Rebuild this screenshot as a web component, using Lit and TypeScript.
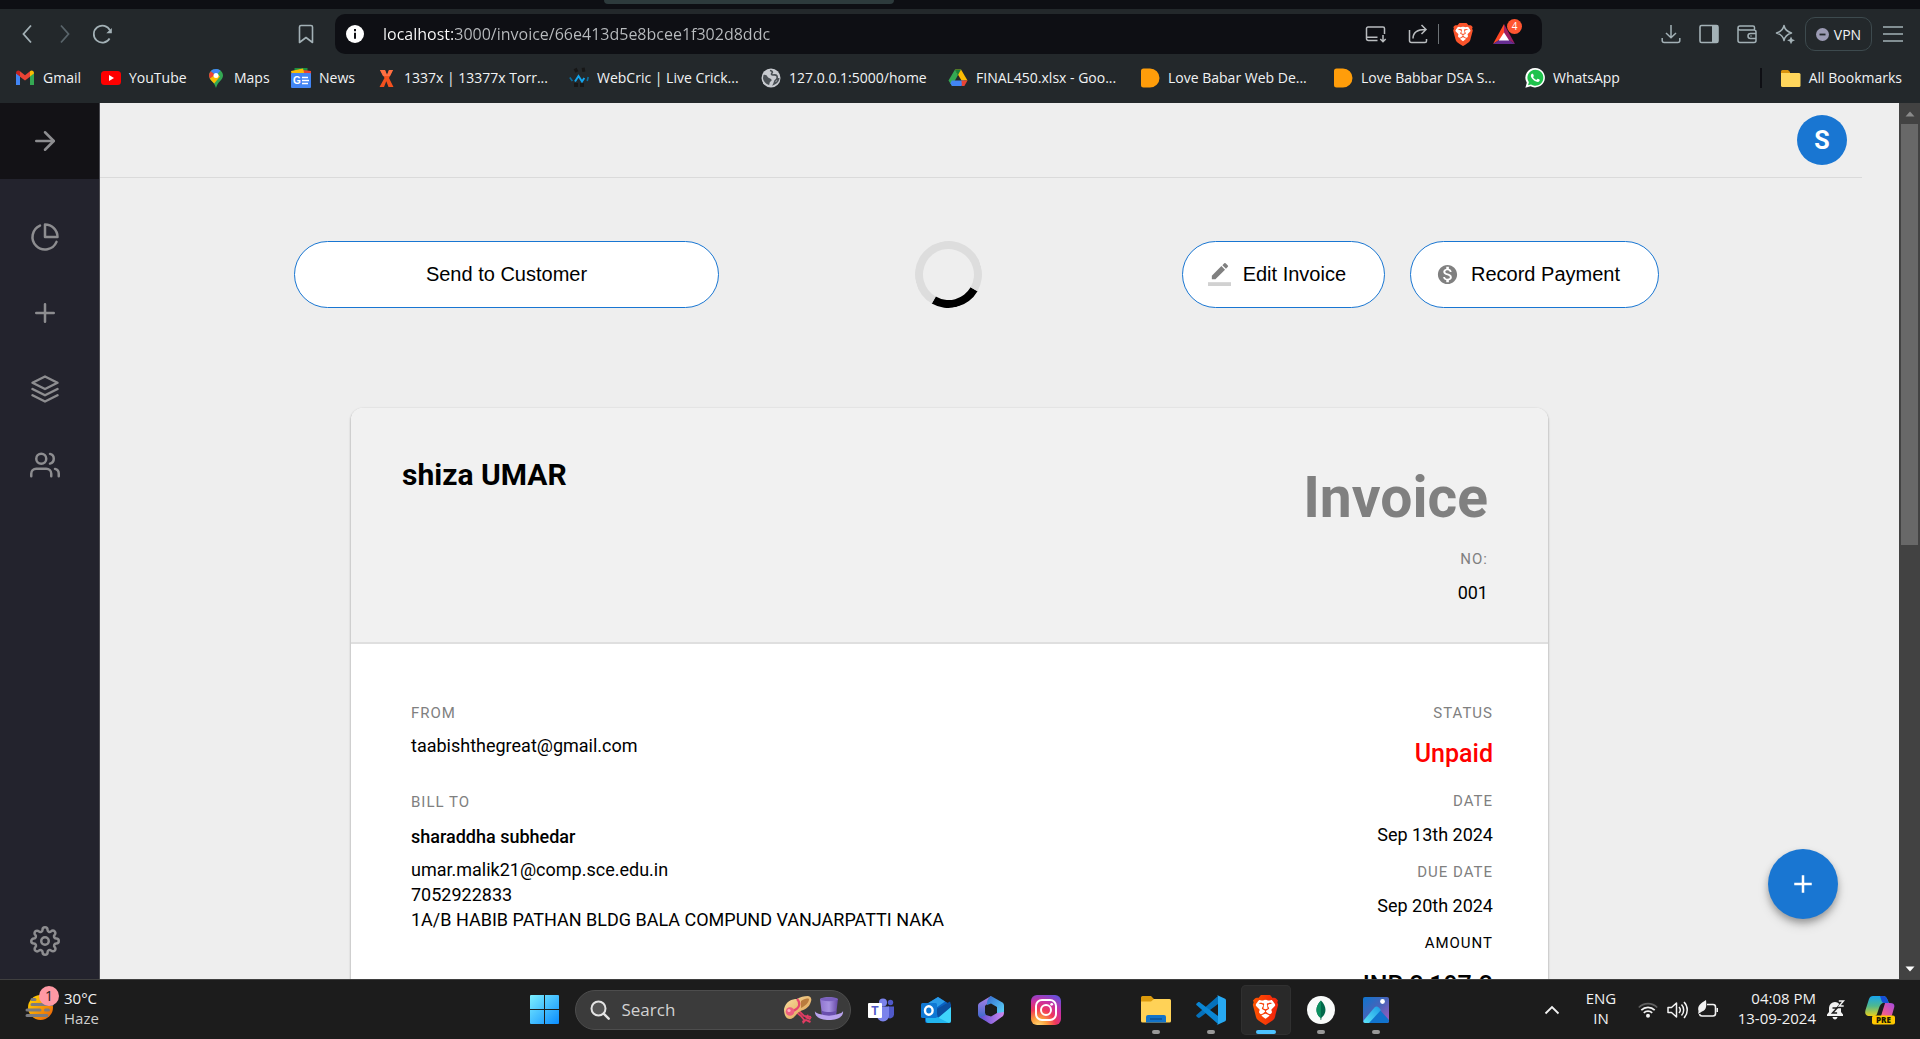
import { LitElement, html, css, svg, type TemplateResult } from "lit";
import { customElement } from "lit/decorators.js";

const BRAVE_PATH =
  "M15.68 0l2.096 2.38s1.84-.512 2.709.358c.868.87 1.584 1.638 1.584 1.638l-.562 1.381.715 2.047s-2.104 7.98-2.35 8.955c-.486 1.919-.818 2.66-2.198 3.633-1.38.972-3.884 2.66-4.293 2.916-.409.256-.92.692-1.38.692-.46 0-.97-.436-1.38-.692a185.796 185.796 0 01-4.293-2.916c-1.38-.973-1.712-1.714-2.197-3.633-.247-.975-2.351-8.955-2.351-8.955l.715-2.047-.562-1.381s.716-.768 1.585-1.638c.868-.87 2.708-.358 2.708-.358L8.321 0h7.36zm-3.679 14.936c-.14 0-1.038.317-1.758.69-.72.373-1.242.637-1.409.742-.167.104-.065.301.087.409.152.107 2.194 1.69 2.393 1.866.198.175.489.464.687.464.198 0 .49-.29.688-.464.198-.175 2.24-1.759 2.392-1.866.152-.108.254-.305.087-.41-.167-.104-.689-.368-1.41-.741-.72-.373-1.617-.69-1.757-.69zm0-11.278s-.409.001-1.022.206-1.278.46-1.584.46c-.307 0-2.581-.434-2.581-.434S4.119 7.152 4.119 7.849c0 .697.339.881.68 1.243l2.02 2.149c.192.203.59.511.356 1.066-.235.555-.58 1.26-.196 1.977.384.716 1.042 1.194 1.464 1.115.421-.08 1.412-.598 1.776-.834.364-.237 1.518-1.19 1.518-1.554 0-.365-1.193-1.02-1.413-1.168-.22-.15-1.226-.725-1.247-.95-.02-.227-.012-.293.284-.851.297-.559.831-1.304.742-1.8-.089-.495-.95-.753-1.565-.986-.615-.232-1.799-.671-1.947-.74-.148-.068-.11-.133.339-.175.448-.043 1.719-.212 2.292-.052.573.16 1.552.403 1.632.532.079.13.149.134.067.579-.081.445-.5 2.581-.541 2.96-.04.38-.12.63.288.724.409.094 1.097.256 1.333.256s.924-.162 1.333-.256c.408-.093.329-.344.288-.723-.04-.38-.46-2.516-.541-2.961-.082-.445-.012-.45.067-.579.08-.129 1.059-.372 1.632-.532.573-.16 1.845.009 2.292.052.449.042.487.107.339.175-.148.069-1.332.508-1.947.74-.615.233-1.476.49-1.565.986-.09.496.445 1.241.742 1.8.297.558.304.624.284.85-.02.226-1.026.802-1.247.95-.22.15-1.413.804-1.413 1.169 0 .364 1.154 1.317 1.518 1.554.364.236 1.355.755 1.776.834.422.079 1.08-.4 1.464-1.115.384-.716.039-1.422-.195-1.977-.235-.555.163-.863.355-1.066l2.02-2.149c.341-.362.68-.546.68-1.243 0-.697-2.695-3.96-2.695-3.96s-2.274.436-2.58.436c-.307 0-.972-.256-1.585-.461-.613-.205-1.022-.206-1.022-.206z";

const braveLion = (fill: string) => svg`
  <path d="M6 3.400h12l2.600 5-2.400 8L12 21l-6.200-4.600L3.400 8.400z" fill="#fff"/>
  <path d=${BRAVE_PATH} fill=${fill} fill-rule="evenodd"/>`;

/** Wraps drawing content in an inline, decorative svg of the given size. */
const icon = (w: number, h: number, box: string, body: unknown): TemplateResult =>
  html`<svg width=${w} height=${h} viewBox=${box} aria-hidden="true" fill="none">${body}</svg>`;

const base = css`
  * {
    box-sizing: border-box;
  }
  svg {
    display: block;
    flex: none;
    overflow: visible;
  }
  button {
    font: inherit;
    color: inherit;
    background: none;
    border: 0;
    padding: 0;
    margin: 0;
    display: flex;
    align-items: center;
    justify-content: center;
    cursor: pointer;
  }
  a {
    color: inherit;
    text-decoration: none;
  }
`;

/* ------------------------------------------------------------------ */
/* Browser toolbar and bookmarks                                       */
/* ------------------------------------------------------------------ */

const bookmarkIcons = {
  gmail: svg`
    <path d="M1 17V5l4 3v9z" fill="#4285f4"/>
    <path d="M15 17V8l4-3v12z" fill="#34a853"/>
    <path d="M1 5.500C1 2.500 3.500 2 5 3.200V8.500L1 5.500z" fill="#c5221f"/>
    <path d="M5 3.300l5 3.900 5-3.900v5.400l-5 3.900-5-3.900z" fill="#ea4335"/>
    <path d="M15 3.200c1.500-1.200 4-.7 4 2.300l-4 3z" fill="#fbbc04"/>`,
  youtube: svg`
    <rect x="0" y="3" width="20" height="14" rx="3.500" fill="#f00"/>
    <path d="M8 7v6l5-3z" fill="#fff"/>`,
  maps: svg`
    <path d="M10 1C6 1 3 4 3 7.400 3 12 8 13 10 20c1.800-7 7-8 7-12.600C17 4 14 1 10 1z" fill="#34a853"/>
    <path d="M3.800 10.500C5.600 13.500 7 14 8.200 15.600L14 8.500 10 5z" fill="#fbbc04"/>
    <path d="M10 1C7.800 1 5.900 1.900 4.700 3.300l5.300 4.500L14.500 2.600C13.300 1.600 11.700 1 10 1z" fill="#4285f4"/>
    <path d="M4.700 3.300C2.500 6 2.700 8.500 3.800 10.500L9 6.800z" fill="#ea4335"/>
    <circle cx="10" cy="7.400" r="2.500" fill="#fff"/>`,
  news: svg`
    <path d="M3.500 0h13v6h-13z" fill="#1e8e3e"/>
    <path d="M8 1.500L20 3v5H8z" fill="#ea4335"/>
    <path d="M0 3l12-2.500L14 8H1z" fill="#fbbc04"/>
    <rect x="0" y="5" width="20" height="15" rx="1" fill="#4285f4"/>
    <text x="2" y="16" font-family="Liberation Sans, sans-serif" font-weight="700" font-size="10" fill="#fff">G</text>
    <path d="M11 9.500h6M11 12.500h7M11 15.500h6" stroke="#fff" stroke-width="1.600"/>`,
  x: svg`
    <path d="M4 2h5l2 5 2-5h4l-4 8 4.500 9h-5L10.300 13.300 8 19H3.500L8.500 10z" fill="#f4511e"/>
    <path d="M4 2h5l2 5 2-5h4l-3 6H7z" fill="#ff7043"/>`,
  webcric: svg`
    <path d="M5.500 3l3-1.500M7 15v4M13 15v4M13 2l3-.5" stroke="#171717" stroke-width="4"/>
    <path d="M.8 9.500l2.600 3.500M19.200 9l-1 4" stroke="#0c6f9f" stroke-width="1.600"/>
    <path d="M6 13.500l3.500-5.500 3.500 5.500 2.300-3.500" stroke="#14a5ee" stroke-width="2"/>`,
  globe: svg`
    <circle cx="10" cy="10" r="9.500" fill="#c8cbd0"/>
    <path d="M2.500 7c2-.5 3.500.3 4 1.800S9 10 10 11s.8 2-.5 2.500-.6 2.600-1.500 3.600C5 16 2 13 2 10z" fill="#4a5055"/>
    <path d="M9 2.500c2 .5 3 1.500 2 2.500s-.5 2 1 2 3-.5 3.800.8.400 3.700-1 4.200-1 2.500-1.800 4c3-1.200 4.500-3.500 4.700-6" stroke="#4a5055" stroke-width="1.700"/>`,
  drive: svg`
    <path d="M7 1.500h6l6.500 11h-6z" fill="#fbbc04"/>
    <path d="M7 1.500l3 5.400L4 18 .5 12.500z" fill="#34a853"/>
    <path d="M3.600 12.500h12.800L13.600 18H6.800L4 18l-1.500-2.500z" fill="#4285f4"/>
    <path d="M13.500 12.500h6L16.400 18h-2.500z" fill="#ea4335"/>
    <path d="M7 1.500h6l-3 5.400z" fill="#188038"/>`,
  dee: svg`<path d="M1 3a2.500 2.500 0 0 1 2.500-2.500H10a9.500 9.500 0 0 1 0 19H3.500A2.500 2.500 0 0 1 1 17z" fill="#ff9d0a"/>`,
  whatsapp: svg`
    <path d="M10.300 0a9.700 9.700 0 1 1-4.800 18.200L.4 19.700l1.400-5A9.700 9.700 0 0 1 10.300 0z" fill="#fff"/>
    <path d="M10.300 1.700a8 8 0 1 1-4.300 14.700L3 17.300l.9-3A8 8 0 0 1 10.300 1.700z" fill="#1fc24c"/>
    <path transform="translate(1.400 .9) scale(.74)" fill="#fff" d="M17.472 14.382c-.297-.149-1.758-.867-2.030-.967-.273-.099-.471-.148-.67.15-.197.297-.767.966-.94 1.164-.173.199-.347.223-.644.075-.297-.15-1.255-.463-2.390-1.475-.883-.788-1.480-1.761-1.653-2.059-.173-.297-.018-.458.13-.606.134-.133.298-.347.446-.52.149-.174.198-.298.298-.497.099-.198.05-.371-.025-.52-.075-.149-.669-1.612-.916-2.207-.242-.579-.487-.5-.669-.51-.173-.008-.371-.01-.57-.01-.198 0-.52.074-.792.372-.272.297-1.040 1.016-1.040 2.479 0 1.462 1.065 2.875 1.213 3.074.149.198 2.096 3.200 5.077 4.487.709.306 1.262.489 1.694.625.712.227 1.360.195 1.871.118.571-.085 1.758-.719 2.006-1.413.248-.694.248-1.289.173-1.413-.074-.124-.272-.198-.57-.347"/>`,
};

const bookmarks: Array<[keyof typeof bookmarkIcons, string]> = [
  ["gmail", "Gmail"],
  ["youtube", "YouTube"],
  ["maps", "Maps"],
  ["news", "News"],
  ["x", "1337x | 13377x Torr..."],
  ["webcric", "WebCric | Live Crick..."],
  ["globe", "127.0.0.1:5000/home"],
  ["drive", "FINAL450.xlsx - Goo..."],
  ["dee", "Love Babar Web De..."],
  ["dee", "Love Babbar DSA S..."],
  ["whatsapp", "WhatsApp"],
];

@customElement("browser-bar")
class BrowserBar extends LitElement {
  static styles = [
    base,
    css`
      :host {
        display: block;
        flex: none;
        background: #23282b;
        color: #f1f3f4;
        font-family: "Open Sans", "Noto Sans", sans-serif;
        font-size: 14px;
      }
      .strip {
        height: 9px;
        background: #0e0f14;
        display: flex;
        padding-left: 604px;
      }
      .tab {
        width: 290px;
        height: 4px;
        background: #2d3a3c;
        border-radius: 0 0 8px 8px;
      }
      .toolbar {
        display: flex;
        align-items: center;
        padding: 5px 17px;
        height: 50px;
        color: #a3b1b6;
      }
      .nav {
        display: flex;
        align-items: center;
        gap: 18px;
        width: 299px;
        margin-right: 19px;
      }
      .nav .save {
        margin-left: auto;
      }
      .dim {
        color: #59646a;
      }
      .address {
        flex: 1;
        height: 40px;
        display: flex;
        align-items: center;
        background: #0e0f14;
        border-radius: 10px;
        padding: 0 20px 0 10px;
        color: #b9bcbf;
      }
      .url {
        flex: 1;
        min-width: 0;
        height: 30px;
        margin: 0 18px;
        padding: 0;
        border: 0;
        outline: 0;
        color: #c3c5c8;
        -webkit-text-fill-color: transparent;
        background: linear-gradient(to right, #fff 73px, #b9bcbf 73px);
        background-clip: text;
        -webkit-background-clip: text;
        font-family: inherit;
        font-size: 16px;
      }
      .tools {
        display: flex;
        align-items: center;
      }
      .share {
        margin-left: 22px;
      }
      .rule {
        width: 1px;
        height: 20px;
        background: #6d7276;
        margin: 0 14px 0 10px;
      }
      .ads {
        position: relative;
        margin-left: 20px;
        margin-right: 7px;
      }
      .badge {
        position: absolute;
        left: 14px;
        top: -5px;
        width: 15px;
        height: 15px;
        border-radius: 50%;
        background: #ff5530;
        color: #fff;
        font-size: 10px;
        line-height: 15px;
        text-align: center;
      }
      .right {
        display: flex;
        align-items: center;
        gap: 18px;
        width: 361px;
        justify-content: flex-end;
      }
      .end {
        display: flex;
        align-items: center;
        gap: 11px;
        margin-left: -8px;
      }
      .vpn {
        width: 67px;
        height: 34px;
        border: 1px solid #3d4a4e;
        border-radius: 10px;
        gap: 5px;
        color: #f1f3f4;
      }
      .marks {
        display: flex;
        align-items: center;
        justify-content: space-between;
        height: 44px;
        padding: 0 18px 6px 15px;
      }
      .list {
        display: grid;
        grid-template-columns: 86px 105px 85px 85px 193px 192px 187px 192px 193px 192px auto;
        margin: 0;
        padding: 0;
        list-style: none;
      }
      .mark {
        display: flex;
        align-items: center;
        gap: 8px;
        white-space: nowrap;
        line-height: 20px;
      }
      .all {
        border-left: 2px solid #0e0f14;
        padding-left: 19px;
      }
    `,
  ];

  render() {
    return html`
      <div class="strip"><div class="tab"></div></div>
      <div class="toolbar">
        <div class="nav">
          <button aria-label="Back">
            ${icon(20, 20, "0 0 20 20", svg`<path d="M14 1.500L6.500 10l7.500 8.500" stroke="currentColor" stroke-width="1.800"/>`)}
          </button>
          <button class="dim" aria-label="Forward">
            ${icon(20, 20, "0 0 20 20", svg`<path d="M6 1.500l7.500 8.500L6 18.500" stroke="currentColor" stroke-width="1.800"/>`)}
          </button>
          <button aria-label="Reload">
            ${icon(20, 20, "0 0 20 20", svg`<path d="M16.600 14.500A8.500 8.500 0 1 1 17 6.500" stroke="currentColor" stroke-width="1.700"/><path d="M18.800 4v5.200h-5.500z" fill="currentColor"/>`)}
          </button>
          <button class="save" aria-label="Bookmark this page">
            ${icon(20, 20, "0 0 20 20", svg`<path d="M3.500 3a1.500 1.500 0 0 1 1.500-1.500h10A1.500 1.500 0 0 1 16.500 3v15.500L10 13.500l-6.500 5z" stroke="currentColor" stroke-width="1.600" stroke-linejoin="round"/>`)}
          </button>
        </div>
        <div class="address">
          ${icon(20, 20, "0 0 20 20", svg`<circle cx="10" cy="10" r="9" fill="#fff"/><path d="M10 8.800v6M10 5v2.300" stroke="#0e0f14" stroke-width="2"/>`)}
          <input class="url" aria-label="Address" spellcheck="false" .value=${"localhost:3000/invoice/66e413d5e8bcee1f302d8ddc"} />
          <div class="tools">
            <button aria-label="Install page">
              ${icon(20, 20, "0 0 20 20", svg`<path d="M11.500 16.500H2.500a2 2 0 0 1-2-2V4.500a1.500 1.500 0 0 1 1.500-1.500h15a1.500 1.500 0 0 1 1.500 1.500v5.500M1 13.300h10.500M17 11v6.500M14.300 15l2.700 2.700 2.700-2.700" stroke="currentColor" stroke-width="1.500"/>`)}
            </button>
            <button class="share" aria-label="Share">
              ${icon(20, 20, "0 0 20 20", svg`<path d="M1.500 6v10.500a2 2 0 0 0 2 2h13.500a1.500 1.500 0 0 0 1.500-1.500v-2M5 14.500C5 8 9 5.500 17.500 5.500M13.500 1l4.500 4.500-4.500 4.500" stroke="currentColor" stroke-width="1.500"/>`)}
            </button>
            <span class="rule"></span>
            <button aria-label="Brave Shields">${icon(20, 23, "2 0 20 24", braveLion("#fb542b"))}</button>
            <button class="ads" aria-label="Brave Rewards">
              ${icon(22, 20, "0 0 22 20", svg`<path d="M11 0L0 20l11-7z" fill="#ff4724"/><path d="M11 0l11 20-11-7z" fill="#9e1f63"/><path d="M0 20h22l-6-4H6z" fill="#662d91"/><path d="M11 8.500L5.800 16.500h10.400z" fill="#fff"/>`)}
              <span class="badge">4</span>
            </button>
          </div>
        </div>
        <div class="right">
          <button aria-label="Downloads">
            ${icon(20, 20, "0 0 20 20", svg`<path d="M10 1v12.500M5 9l5 4.800L15 9M1.200 14v2.500a2 2 0 0 0 2 2h13.600a2 2 0 0 0 2-2V14" stroke="currentColor" stroke-width="1.500"/>`)}
          </button>
          <button aria-label="Sidebar">
            ${icon(20, 20, "0 0 20 20", svg`<rect x="1" y="1.500" width="18" height="17" rx="1.500" stroke="currentColor" stroke-width="1.600"/><path d="M13 1.500h6v17h-6z" fill="currentColor"/>`)}
          </button>
          <button aria-label="Wallet">
            ${icon(20, 20, "0 0 20 20", svg`<path d="M17.500 6V3.500A1.500 1.500 0 0 0 16 2H3a2 2 0 0 0 0 4h14a2 2 0 0 1 2 2v8.500a2 2 0 0 1-2 2H3a2 2 0 0 1-2-2V4M19 9.500h-5.500a2.500 2.500 0 0 0 0 5H19M13.500 12h1" stroke="currentColor" stroke-width="1.500"/>`)}
          </button>
          <button aria-label="Leo">
            ${icon(20, 20, "0 0 20 20", svg`<path d="M9 1.500c.8 4 2.500 6 7.500 7.500-5 1.500-6.700 3.500-7.500 7.500-.8-4-2.500-6-7.500-7.500C6.500 7.500 8.200 5.500 9 1.500z" stroke="currentColor" stroke-width="1.500" stroke-linejoin="round"/><path d="M16 12.500l1.300 2.700 2.700 1.100-2.700 1.200L16 20.200l-1.200-2.700-2.700-1.200 2.700-1.100z" fill="currentColor"/>`)}
          </button>
          <div class="end">
            <button class="vpn">
              ${icon(13, 13, "0 0 13 13", svg`<circle cx="6.500" cy="6.500" r="6.500" fill="#9c9bb4"/><path d="M3.500 6.500h6" stroke="#23282b" stroke-width="1.800"/>`)}
              VPN
            </button>
            <button aria-label="Menu">
              ${icon(20, 20, "0 0 20 20", svg`<path d="M0 3h20M0 10h20M0 17h20" stroke="currentColor" stroke-width="1.500"/>`)}
            </button>
          </div>
        </div>
      </div>
      <nav class="marks" aria-label="Bookmarks">
        <ul class="list">
          ${bookmarks.map(
            ([key, label]) => html`<li><a class="mark" href="#">${icon(20, 20, "0 0 20 20", bookmarkIcons[key])}<span>${label}</span></a></li>`,
          )}
        </ul>
        <a class="mark all" href="#">
          ${icon(20, 20, "0 0 20 20", svg`<path d="M0 3.500A1.500 1.500 0 0 1 1.500 2H7l2 2v3H0z" fill="#d9930d"/><path d="M0 5h18a1.500 1.500 0 0 1 1.500 1.500v11A1.500 1.500 0 0 1 18 19H1.500A1.500 1.500 0 0 1 0 17.500z" fill="#ffd65c"/>`)}
          <span>All Bookmarks</span>
        </a>
      </nav>
    `;
  }
}

/* ------------------------------------------------------------------ */
/* Application side navigation                                         */
/* ------------------------------------------------------------------ */

const sideIcons: Array<[string, unknown]> = [
  ["Dashboard", svg`<path d="M21.210 15.890A10 10 0 1 1 8 2.830"/><path d="M22 12A10 10 0 0 0 12 2v10z"/>`],
  ["Create invoice", svg`<path d="M12 5v14M5 12h14"/>`],
  ["Invoices", svg`<path d="M12 2L2 7l10 5 10-5-10-5z"/><path d="M2 17l10 5 10-5"/><path d="M2 12l10 5 10-5"/>`],
  [
    "Customers",
    svg`<path d="M17 21v-2a4 4 0 0 0-4-4H5a4 4 0 0 0-4 4v2"/><circle cx="9" cy="7" r="4"/><path d="M23 21v-2a4 4 0 0 0-3-3.870"/><path d="M16 3.130a4 4 0 0 1 0 7.750"/>`,
  ],
];

const lineIcon = (body: unknown) =>
  icon(
    30,
    30,
    "0 0 24 24",
    svg`<g stroke="currentColor" stroke-width="2" stroke-linecap="round" stroke-linejoin="round">${body}</g>`,
  );

@customElement("side-nav")
class SideNav extends LitElement {
  static styles = [
    base,
    css`
      :host {
        flex: none;
        width: 100px;
        display: flex;
        flex-direction: column;
        background: #23232d;
        border-right: 1px solid #4a4a50;
        color: #8d8d90;
      }
      .item {
        display: flex;
        align-items: center;
        height: 76px;
        width: 100%;
        padding-left: 30px;
        justify-content: flex-start;
      }
      .toggle {
        background: #131216;
      }
      .links {
        padding-top: 20px;
      }
      .settings {
        margin-top: auto;
      }
    `,
  ];

  render() {
    return html`
      <button class="item toggle" aria-label="Expand menu">${lineIcon(svg`<path d="M5 12h14"/><path d="M12 5l7 7-7 7"/>`)}</button>
      <nav class="links">
        ${sideIcons.map(([label, body]) => html`<a class="item" href="#" aria-label=${label}>${lineIcon(body)}</a>`)}
      </nav>
      <a class="item settings" href="#" aria-label="Settings">
        ${lineIcon(svg`<circle cx="12" cy="12" r="3"/><path d="M19.400 15a1.650 1.650 0 0 0 .33 1.820l.06.06a2 2 0 0 1 0 2.830 2 2 0 0 1-2.830 0l-.06-.06a1.650 1.650 0 0 0-1.820-.33 1.650 1.650 0 0 0-1 1.510V21a2 2 0 0 1-2 2 2 2 0 0 1-2-2v-.09A1.650 1.650 0 0 0 9 19.400a1.650 1.650 0 0 0-1.820.33l-.06.06a2 2 0 0 1-2.830 0 2 2 0 0 1 0-2.830l.06-.06a1.650 1.650 0 0 0 .33-1.820 1.650 1.650 0 0 0-1.510-1H3a2 2 0 0 1-2-2 2 2 0 0 1 2-2h.09A1.650 1.650 0 0 0 4.600 9a1.650 1.650 0 0 0-.33-1.820l-.06-.06a2 2 0 0 1 0-2.830 2 2 0 0 1 2.830 0l.06.06a1.650 1.650 0 0 0 1.820.33H9a1.650 1.650 0 0 0 1-1.510V3a2 2 0 0 1 2-2 2 2 0 0 1 2 2v.09a1.650 1.650 0 0 0 1 1.510 1.650 1.650 0 0 0 1.820-.33l.06-.06a2 2 0 0 1 2.830 0 2 2 0 0 1 0 2.830l-.06.06a1.650 1.650 0 0 0-.33 1.820V9a1.650 1.650 0 0 0 1.510 1H21a2 2 0 0 1 2 2 2 2 0 0 1-2 2h-.09a1.650 1.650 0 0 0-1.510 1z"/>`)}
      </a>
    `;
  }
}

/* ------------------------------------------------------------------ */
/* Invoice page                                                        */
/* ------------------------------------------------------------------ */

@customElement("invoice-view")
class InvoiceView extends LitElement {
  static styles = [
    base,
    css`
      :host {
        flex: 1;
        min-width: 0;
        min-height: 0;
        overflow: hidden;
        position: relative;
        background: #eeeeee;
        color: #000;
        font-family: Roboto, sans-serif;
        font-size: 18px;
        line-height: 25px;
      }
      .top {
        display: flex;
        justify-content: flex-end;
        align-items: center;
        height: 75px;
        margin-right: 37px;
        padding-right: 15px;
        border-bottom: 1px solid #dadada;
      }
      .avatar {
        width: 50px;
        height: 50px;
        border-radius: 50%;
        background: #1976d2;
        color: #fff;
        font-size: 25px;
        font-weight: 700;
      }
      .actions {
        display: flex;
        align-items: center;
        justify-content: space-between;
        margin: 63px 240px 100px 194px;
        font-family: "Liberation Sans", Arial, sans-serif;
        font-size: 20px;
      }
      .pill {
        height: 67px;
        border: 1px solid #1976d2;
        border-radius: 34px;
        background: #fff;
        color: #000;
        gap: 12px;
        padding: 0 38px 0 25px;
        white-space: nowrap;
      }
      .send {
        flex: 0 1 425px;
        padding: 0 20px;
      }
      .pair {
        display: flex;
        gap: 25px;
        padding-left: 4px;
      }
      .glyph {
        color: #808080;
      }
      .spinner {
        width: 67px;
        height: 67px;
        border: 8px solid #dddddd;
        border-bottom-color: #000;
        border-radius: 50%;
        transform: rotate(-15deg);
      }
      .card {
        margin: 0 351px 40px 251px;
        border-radius: 12px;
        background: #fff;
        box-shadow: 0 1px 3px rgba(0, 0, 0, 0.2), 0 1px 2px rgba(0, 0, 0, 0.24);
      }
      .head {
        display: flex;
        justify-content: space-between;
        background: #f1f1f1;
        border-bottom: 2px solid #dfdfdf;
        border-radius: 12px 12px 0 0;
        padding: 49px 60px 37px 51px;
      }
      h1,
      h2,
      p {
        margin: 0;
      }
      .company {
        font-size: 30px;
        line-height: 36px;
        font-weight: 700;
      }
      .title {
        color: #808080;
        font-size: 57px;
        line-height: 60px;
        font-weight: 700;
        margin: 11px 0 21px;
      }
      .side {
        text-align: right;
      }
      .label {
        font-size: 15px;
        line-height: 20px;
        letter-spacing: 1px;
        text-transform: uppercase;
        color: #808080;
        margin-bottom: 10px;
      }
      .side .label {
        margin-bottom: 11px;
      }
      .body {
        display: flex;
        justify-content: space-between;
        padding: 59px 55px 60px 60px;
      }
      .gap {
        margin-bottom: 34px;
      }
      .name {
        font-weight: 500;
        margin: 12px 0 8px;
      }
      .value {
        margin-bottom: 15px;
      }
      .big {
        font-size: 25px;
        line-height: 30px;
        font-weight: 500;
      }
      .unpaid {
        color: #ff0000;
        margin: 16px 0 22px;
      }
      .side .strong {
        color: #000;
        margin-bottom: 18px;
      }
      .fab {
        position: absolute;
        right: 61px;
        bottom: 60px;
        width: 70px;
        height: 70px;
        border-radius: 50%;
        background: #1976d2;
        color: #fff;
        box-shadow: 0 4px 6px rgba(0, 0, 0, 0.25), 0 6px 12px rgba(0, 0, 0, 0.14);
      }
    `,
  ];

  render() {
    return html`
      <header class="top"><button class="avatar" aria-label="Account">S</button></header>
      <div class="actions">
        <button class="pill send">Send to Customer</button>
        <div class="spinner" role="status" aria-label="Loading"></div>
        <div class="pair">
          <button class="pill">
            <span class="glyph">
              ${icon(23, 23, "0 0 24 24", svg`<path fill="currentColor" d="M17.750 7L14 3.250l-10 10V17h3.750l10-10zm2.960-2.960c.39-.39.39-1.020 0-1.410L18.370.29a.996.996 0 0 0-1.410 0L15 2.250 18.750 6l1.960-1.960z"/><path fill="currentColor" fill-opacity=".36" d="M0 20h24v4H0z"/>`)}
            </span>
            Edit Invoice
          </button>
          <button class="pill">
            <span class="glyph">
              ${icon(23, 23, "0 0 24 24", svg`<path fill="currentColor" d="M12 2C6.480 2 2 6.480 2 12s4.480 10 10 10 10-4.480 10-10S17.520 2 12 2zm1.410 16.090V20h-2.670v-1.930c-1.710-.36-3.160-1.460-3.270-3.400h1.960c.1 1.050.82 1.870 2.650 1.870 1.960 0 2.400-.98 2.400-1.590 0-.83-.44-1.610-2.670-2.140-2.480-.6-4.180-1.620-4.180-3.670 0-1.720 1.390-2.840 3.110-3.210V4h2.670v1.950c1.860.45 2.790 1.860 2.850 3.390H14.300c-.05-1.110-.64-1.870-2.220-1.870-1.500 0-2.400.68-2.400 1.640 0 .84.65 1.390 2.670 1.910s4.180 1.390 4.180 3.910c-.02 1.830-1.380 2.830-3.120 3.160z"/>`)}
            </span>
            Record Payment
          </button>
        </div>
      </div>
      <article class="card">
        <div class="head">
          <h2 class="company">shiza UMAR</h2>
          <div class="side">
            <h1 class="title">Invoice</h1>
            <p class="label">No:</p>
            <p>001</p>
          </div>
        </div>
        <div class="body">
          <div>
            <p class="label">From</p>
            <p class="gap">taabishthegreat@gmail.com</p>
            <p class="label">Bill to</p>
            <p class="name">sharaddha subhedar</p>
            <p>umar.malik21@comp.sce.edu.in</p>
            <p>7052922833</p>
            <p>1A/B HABIB PATHAN BLDG BALA COMPUND VANJARPATTI NAKA</p>
          </div>
          <div class="side">
            <p class="label">Status</p>
            <p class="big unpaid">Unpaid</p>
            <p class="label">Date</p>
            <p class="value">Sep 13th 2024</p>
            <p class="label">Due Date</p>
            <p class="value">Sep 20th 2024</p>
            <p class="label strong">Amount</p>
            <p class="big">INR 2,197.2</p>
          </div>
        </div>
      </article>
      <button class="fab" aria-label="New invoice">
        ${icon(30, 30, "0 0 24 24", svg`<path d="M19 13h-6v6h-2v-6H5v-2h6V5h2v6h6v2z" fill="currentColor"/>`)}
      </button>
    `;
  }
}

/* ------------------------------------------------------------------ */
/* Desktop taskbar                                                     */
/* ------------------------------------------------------------------ */

const startIcon = icon(
  29,
  29,
  "0 0 29 29",
  svg`
    <defs><linearGradient id="win" x1="0" y1="0" x2="1" y2="1"><stop offset="0" stop-color="#7df0ff"/><stop offset="1" stop-color="#0a8cff"/></linearGradient></defs>
    <path d="M1 0h13v14H0V1a1 1 0 0 1 1-1zM15 0h13a1 1 0 0 1 1 1v13H15zM0 15h14v14H1a1 1 0 0 1-1-1zM15 15h14v13a1 1 0 0 1-1 1H15z" fill="url(#win)"/>`,
);

const hatsIcon = icon(
  60,
  28,
  "0 0 60 28",
  svg`
    <defs>
      <linearGradient id="straw" x1="0" y1="0" x2="1" y2="1"><stop offset="0" stop-color="#fbe0a0"/><stop offset="1" stop-color="#d99a4e"/></linearGradient>
      <linearGradient id="top" x1="0" y1="0" x2="1" y2="0"><stop offset="0" stop-color="#8f74cf"/><stop offset=".5" stop-color="#a893e2"/><stop offset="1" stop-color="#6548a4"/></linearGradient>
    </defs>
    <path d="M11 15l6 5 4 5M15 15l5 5 7 1" stroke="#e13c63" stroke-width="1.800"/>
    <path d="M18 25l4-2 5 2-1 2-4-2-3 3zM21 22l3-4 1 4 3-1-2 3z" fill="#e13c63"/>
    <path d="M0 13C2 5 8 3 13 3c3-2 7-3 11-3 4 1 4 4 2 8-2 5-8 6-11 8-3 2-5 7-9 7-5 0-6-6-6-10z" fill="url(#straw)"/>
    <path d="M17 5c3-2 6-3 8-2 0 4-4 7-8 9z" fill="#b97b3d"/>
    <path d="M13 3c4 4 3 9-4 12" stroke="#e6456e" stroke-width="2.200"/>
    <circle cx="6" cy="15.500" r="4.300" fill="#ee5f80"/><circle cx="5" cy="14.500" r="1.600" fill="#ffb0bf"/>
    <path d="M36 3c4-2.500 14-2.500 18 0l-2 16c-4 3-10 3-14 0z" fill="url(#top)"/>
    <ellipse cx="45" cy="3.200" rx="9" ry="2" fill="#7a60be"/>
    <path d="M37.500 14.500c4 2 11 2 15 0l-.5 4.500c-4 2.500-10 2.500-14 0z" fill="#6a4fae"/>
    <path d="M31 15c0 2 4 3 7 3.500 4 1.500 10 1.500 14 0 3-.5 7-2 7-3.500 1 6-6 9-14 9s-15-3-14-9z" fill="#b9a3ee"/>`,
);

const teamsIcon = icon(
  26,
  26,
  "0 0 26 26",
  svg`
    <circle cx="15" cy="5.500" r="4" fill="#7b83eb"/><circle cx="22.500" cy="5.500" r="2.700" fill="#5059c9"/>
    <path d="M20 9.500h6v8a4 4 0 0 1-6 3.300z" fill="#5059c9"/>
    <path d="M9 9.500h12v9a6 6 0 0 1-12 0z" fill="#7b83eb"/>
    <rect x="0" y="6" width="14" height="15" rx="1" fill="#fff"/>
    <text x="7" y="18" text-anchor="middle" font-family="Liberation Sans, sans-serif" font-weight="700" font-size="12" fill="#5059c9">T</text>`,
);

const outlookIcon = icon(
  30,
  28,
  "0 0 30 28",
  svg`
    <path d="M4 9L17 1l13 8v16a2 2 0 0 1-2 2H6a2 2 0 0 1-2-2z" fill="#0a63c4"/>
    <path d="M4 9L17 1l7 4.500L8 17z" fill="#2a9be8"/>
    <path d="M14 14L29 5.500l1 3.500v6L18 22z" fill="#0b4fa0"/>
    <path d="M30 11v14a2 2 0 0 1-2 2H7c3 0 5-1 7-2.500z" fill="#3fd5fb"/>
    <path d="M5 20l11 1 12 6H7a2 2 0 0 1-2-2z" fill="#22b5ee"/>
    <rect x="0" y="7" width="16" height="15" rx="1.500" fill="#0f78d4"/>
    <ellipse cx="7.800" cy="14.500" rx="3.800" ry="4.200" stroke="#fff" stroke-width="2.400"/>`,
);

const m365Icon = icon(
  28,
  28,
  "0 0 28 28",
  svg`
    <defs>
      <linearGradient id="ma" x1="0" y1="0" x2="0" y2="1"><stop offset="0" stop-color="#b180e6"/><stop offset="1" stop-color="#2b66c8"/></linearGradient>
      <linearGradient id="mb" x1="0" y1="0" x2="1" y2="1"><stop offset="0" stop-color="#3468cc"/><stop offset="1" stop-color="#5fe0ff"/></linearGradient>
      <linearGradient id="mc" x1="0" y1="0" x2="1" y2="0"><stop offset="0" stop-color="#5a4bd1"/><stop offset="1" stop-color="#d08af0"/></linearGradient>
    </defs>
    <path d="M14 0L3 6.500C1.500 7.500 1 8.500 1 10v8c0 2 .8 3 2 3.700L9 25c1-3 .2-6-1-8V10c1-1.500 3-2.500 5-3z" fill="url(#ma)"/>
    <path d="M14 0c-3 2-4 4-4 9l4-1.500 6 3.500v10l5-2.500c1.500-1 2-2 2-3.500V9.500c0-1.500-.8-2.500-2-3.200z" fill="url(#mb)"/>
    <path d="M2 20.500c3 0 5-.5 7-1.500l5 1.500 6-3.500 7-1c0 3-.8 4-2 4.800L16 27.300c-1.500.9-2.500.9-4 0z" fill="url(#mc)"/>
    <path d="M14 9l4.400 2.500v5L14 19l-4.400-2.500v-5z" fill="#1c1c1c"/>`,
);

const instaIcon = icon(
  30,
  30,
  "0 0 30 30",
  svg`
    <defs>
      <radialGradient id="ig" cx=".25" cy="1.050" r="1.150"><stop offset="0" stop-color="#ffdc7a"/><stop offset=".25" stop-color="#fb9d3c"/><stop offset=".5" stop-color="#f0375b"/><stop offset=".75" stop-color="#c930a4"/><stop offset="1" stop-color="#6b4fd8"/></radialGradient>
    </defs>
    <rect width="30" height="30" rx="6" fill="url(#ig)"/>
    <rect x="5" y="5" width="20" height="20" rx="6" stroke="#fff" stroke-width="2"/>
    <circle cx="15" cy="15" r="5" stroke="#fff" stroke-width="2"/>
    <circle cx="20.700" cy="9.300" r="1.400" fill="#fff"/>`,
);

const filesIcon = icon(
  30,
  27,
  "0 0 30 27",
  svg`
    <path d="M0 1.500A1.500 1.500 0 0 1 1.500 0H10l3 3h15.500V9H0z" fill="#dc9a0c"/>
    <path d="M0 5.500h10l3-2.500h15.500A1.500 1.500 0 0 1 30 4.500V25a1.500 1.500 0 0 1-1.500 1.500h-27A1.500 1.500 0 0 1 0 25z" fill="#ffd257"/>
    <path d="M5 26.500V21a2 2 0 0 1 2-2h16a2 2 0 0 1 2 2v5.500z" fill="#1273c9"/>
    <path d="M9 23h12" stroke="#0a4f94" stroke-width="1.500"/>`,
);

const codeIcon = icon(
  30,
  30,
  "0 0 30 30",
  svg`
    <path d="M1 19.500L22 1l2 6.500L4 22.500c-.8.6-1.600.5-2.200 0L.6 21.400c-.7-.6-.5-1.400.4-1.900z" fill="#0571bb"/>
    <path d="M1 10.500L22 29l2-6.500L4 7.500c-.8-.6-1.600-.5-2.200 0L.6 8.600c-.7.6-.5 1.400.4 1.900z" fill="#0a86d4"/>
    <path d="M21.500.3L28.600 3.500c.9.4 1.400 1 1.400 2v19c0 1-.5 1.600-1.400 2l-7.100 3.200c-.6.3-1.300.1-1.700-.3 1 .6 2.200 0 2.200-1.200V1.800c0-1.200-1.200-1.800-2.200-1.200.4-.5 1.100-.6 1.700-.3z" fill="#27a9f2"/>`,
);

const braveIcon = icon(
  25,
  30,
  "1.930 0 20.140 24",
  svg`
    <defs><linearGradient id="br" x1="0" y1="0" x2="1" y2="0"><stop offset="0" stop-color="#ff5500"/><stop offset="1" stop-color="#f0200c"/></linearGradient></defs>
    ${braveLion("url(#br)")}`,
);

const mongoIcon = icon(
  28,
  28,
  "0 0 28 28",
  svg`
    <circle cx="14" cy="14" r="14" fill="#f9fbfa"/>
    <path d="M14 4.500c4.500 4.500 5.500 9.500 3.500 13.500-.8 1.700-2.200 2.800-3 3.700L14.200 24h-.6l-.2-2.300c-1-.9-2.300-2-3-3.700C8.500 14 9.500 9 14 4.500z" fill="#00684a"/>
    <path d="M14 4.500c-4.500 4.500-5.500 9.500-3.600 13.500.7 1.700 2 2.800 3 3.700l.4-.2z" fill="#0b8f5f"/>`,
);

const photosIcon = icon(
  26,
  26,
  "0 0 26 26",
  svg`
    <defs>
      <linearGradient id="ph" x1="0" y1="0" x2="1" y2="1"><stop offset="0" stop-color="#0d75cf"/><stop offset=".5" stop-color="#4a63b8"/><stop offset="1" stop-color="#a75ac0"/></linearGradient>
      <linearGradient id="pm" x1="0" y1="1" x2="1" y2="0"><stop offset="0" stop-color="#5be3f7"/><stop offset="1" stop-color="#1b9be6"/></linearGradient>
    </defs>
    <rect width="26" height="26" rx="2" fill="url(#ph)"/>
    <path d="M1 25L12 11.500c1-1.200 2.500-1.200 3.500 0L26 23v1a2 2 0 0 1-2 2H2z" fill="#1173cd"/>
    <path d="M1 23L11.500 10.500c1.200-1.300 3-1.300 4.200 0l2.300 2.500L6 26H2a2 2 0 0 1-1-3z" fill="url(#pm)"/>
    <circle cx="19.500" cy="4.500" r="2.400" fill="#fff"/>`,
);

const weatherIcon = icon(
  30,
  26,
  "0 0 30 26",
  svg`
    <defs><linearGradient id="sun" x1="0" y1="0" x2="1" y2="1"><stop offset=".2" stop-color="#ffc400"/><stop offset="1" stop-color="#e8590c"/></linearGradient></defs>
    <circle cx="15.500" cy="12.500" r="12.500" fill="url(#sun)"/>
    <path d="M7 4.500h3M7 9.500h20M2 15h13M20.500 15h3M2 20.500h20" stroke="#7c7c80" stroke-width="3" stroke-linecap="round"/>`,
);

const copilotIcon = icon(
  30,
  30,
  "0 0 30 30",
  svg`
    <defs>
      <linearGradient id="ca" x1="0" y1="0" x2="0" y2="1"><stop offset="0" stop-color="#17a5ee"/><stop offset=".5" stop-color="#4fb88e"/><stop offset="1" stop-color="#e8cf1c"/></linearGradient>
      <linearGradient id="cb" x1="1" y1="0" x2="0" y2="1"><stop offset="0" stop-color="#a34be0"/><stop offset=".6" stop-color="#f05a94"/><stop offset="1" stop-color="#ff9a4a"/></linearGradient>
    </defs>
    <path d="M8 1h10c3 0 4 2 5 5l1 2h-5c-3 0-4 2-5 5l-2 6c-.7 2-2 2-4 2H5c-4 0-5.500-2-4.500-6L4 4c.8-2 2-3 4-3z" fill="url(#ca)"/>
    <path d="M15 1h3c3 0 4 2 5 5l.7 2h-4.200C17 8 16.500 6 16 4z" fill="#1650d8"/>
    <path d="M20 8h5c4 0 5 2 4 5l-2 7c-1 3-3 4-6 4h-9c2 0 3-1 3.600-3l2.400-9c.6-2 1-3 2-4z" fill="url(#cb)"/>
    <path d="M19 8l-4 13" stroke="#1c1c1c" stroke-width="2"/>
    <rect x="7" y="20.500" width="23" height="9" rx="2" fill="#ffc800"/>
    <text x="18.500" y="28" text-anchor="middle" font-family="Open Sans, sans-serif" font-weight="800" font-size="8" fill="#201a00">PRE</text>`,
);

type App = { label: string; art?: TemplateResult; state?: "open" | "active" };

const apps: App[] = [
  { label: "Teams", art: teamsIcon },
  { label: "Outlook", art: outlookIcon },
  { label: "Microsoft 365", art: m365Icon },
  { label: "Instagram", art: instaIcon },
  { label: "" },
  { label: "File Explorer", art: filesIcon, state: "open" },
  { label: "Visual Studio Code", art: codeIcon, state: "open" },
  { label: "Brave", art: braveIcon, state: "active" },
  { label: "MongoDB Compass", art: mongoIcon, state: "open" },
  { label: "Photos", art: photosIcon, state: "open" },
];

@customElement("task-bar")
class TaskBar extends LitElement {
  static styles = [
    base,
    css`
      :host {
        flex: none;
        display: grid;
        grid-template-columns: 1fr auto 1fr;
        align-items: center;
        height: 60px;
        background: #1c1c1c;
        border-top: 1px solid #3f3f3f;
        color: #f2f2f2;
        font-family: "Open Sans", "Noto Sans", sans-serif;
        font-size: 15px;
        line-height: 20px;
      }
      .weather {
        position: relative;
        justify-self: start;
        display: flex;
        gap: 9px;
        padding: 0 0 4px 25px;
        text-align: left;
      }
      .count {
        position: absolute;
        left: 39px;
        top: -2px;
        width: 20px;
        height: 20px;
        border-radius: 50%;
        background: #ff99a4;
        color: #1c1c1c;
        font-size: 14px;
        text-align: center;
      }
      .haze {
        color: #cfcfcf;
      }
      .center {
        display: flex;
        align-items: center;
        gap: 5px;
      }
      .slot {
        position: relative;
        width: 50px;
        height: 50px;
        border-radius: 5px;
      }
      .active {
        background: #292929;
        box-shadow: inset 0 0 0 1px #303030;
      }
      .slot::after {
        content: "";
        position: absolute;
        left: 21px;
        bottom: 1px;
        width: 8px;
        height: 4px;
        border-radius: 2px;
      }
      .open::after {
        background: #989898;
      }
      .active::after {
        left: 15px;
        width: 20px;
        background: #4cc2ff;
      }
      .search {
        display: flex;
        align-items: center;
        width: 276px;
        height: 40px;
        border: 1px solid #4d4d4d;
        border-radius: 20px;
        background: #3b3b3b;
        padding: 0 6px 0 14px;
        gap: 12px;
      }
      .field {
        flex: 1;
        min-width: 0;
        border: 0;
        outline: 0;
        padding: 0;
        background: none;
        color: #d2d2d2;
        font-family: inherit;
        font-size: 17px;
      }
      .field::placeholder {
        color: #d2d2d2;
        opacity: 1;
      }
      .tray {
        justify-self: end;
        display: flex;
        align-items: center;
        padding-right: 25px;
      }
      .lang {
        width: 50px;
        margin: 0 12px 0 16px;
        padding-bottom: 4px;
        text-align: center;
      }
      .status {
        gap: 9px;
      }
      .clock {
        display: block;
        text-align: right;
        width: 80px;
        margin: 0 11px 0 18px;
        padding-bottom: 4px;
      }
      .copilot {
        margin-left: 20px;
      }
    `,
  ];

  render() {
    return html`
      <button class="weather">
        ${weatherIcon}
        <span class="count">1</span>
        <span>30°C<br /><span class="haze">Haze</span></span>
      </button>
      <div class="center">
        <button class="slot" aria-label="Start">${startIcon}</button>
        <label class="search">
          ${icon(20, 20, "0 0 20 20", svg`<circle cx="8.500" cy="8.500" r="7" stroke="#e4e4e4" stroke-width="2" fill="#555"/><path d="M13.700 13.700l5 5" stroke="#e4e4e4" stroke-width="2.400" stroke-linecap="round"/>`)}
          <input class="field" type="text" placeholder="Search" aria-label="Search" />
          ${hatsIcon}
        </label>
        ${apps.map((app) =>
          app.art
            ? html`<button class="slot ${app.state ?? ""}" aria-label=${app.label}>${app.art}</button>`
            : html`<span class="slot"></span>`,
        )}
      </div>
      <div class="tray">
        <button aria-label="Show hidden icons">
          ${icon(16, 16, "0 0 16 16", svg`<path d="M1.500 11.500L8 5l6.500 6.500" stroke="currentColor" stroke-width="1.800"/>`)}
        </button>
        <button class="lang"><span>ENG<br />IN</span></button>
        <button class="status" aria-label="Network, volume and battery">
          ${icon(20, 20, "0 0 20 20", svg`<path d="M.8 7.500a13 13 0 0 1 18.400 0" stroke="#606060" stroke-width="1.700"/><path d="M3.300 10.200a9.500 9.500 0 0 1 13.400 0M5.800 12.800a6 6 0 0 1 8.400 0" stroke="currentColor" stroke-width="1.700"/><circle cx="10" cy="15.800" r="2" fill="currentColor"/>`)}
          ${icon(21, 20, "0 0 21 20", svg`<path d="M1 7.500h3.500L9.500 3v14l-5-4.500H1z" stroke="currentColor" stroke-width="1.500" stroke-linejoin="round"/><path d="M12 7a4.500 4.500 0 0 1 0 6M14.500 4.500a8 8 0 0 1 0 11M17 2a11.500 11.500 0 0 1 0 16" stroke="currentColor" stroke-width="1.500"/>`)}
          ${icon(21, 20, "0 0 21 20", svg`<path d="M10 4.500h6a2.500 2.500 0 0 1 2.500 2.500v6.500a2.500 2.500 0 0 1-2.500 2.500H5a2.500 2.500 0 0 1-2.500-2" stroke="currentColor" stroke-width="1.600"/><path d="M19.500 8h1.500v4h-1.500zM1.500 11C0 6 4 3 9 0c.5 5 1 10-4 11.500L1.200 14z" fill="currentColor"/>`)}
        </button>
        <button class="clock">04:08 PM<br />13-09-2024</button>
        <button aria-label="Notifications">
          ${icon(18, 20, "0 0 18 20", svg`<path d="M8 2a6 6 0 0 1 6 6v4l2 2.500V16H0v-1.500L2 12V8a6 6 0 0 1 6-6zM5.500 17h5c-.3 1.600-1.200 2.500-2.500 2.500S5.800 18.600 5.500 17z" fill="currentColor"/><path d="M11.500 1.500h5l-4 5h4.500" stroke="#1c1c1c" stroke-width="3.500"/><path d="M5.500 8h4.600l-4.600 5h4.600" stroke="#1c1c1c" stroke-width="1.500"/><path d="M11.800 1h4.700l-4.300 5h4.500" stroke="currentColor" stroke-width="1.400"/>`)}
        </button>
        <button class="copilot" aria-label="Copilot">${copilotIcon}</button>
      </div>
    `;
  }
}

/* ------------------------------------------------------------------ */
/* Root                                                                */
/* ------------------------------------------------------------------ */

@customElement("app-root")
class AppRoot extends LitElement {
  static styles = [
    base,
    css`
      :host {
        display: flex;
        flex-direction: column;
        height: 100vh;
        overflow: hidden;
      }
      .page {
        flex: 1;
        min-height: 0;
        display: flex;
      }
      .scroll {
        flex: none;
        width: 21px;
        display: flex;
        flex-direction: column;
        background: #424242;
        padding: 0 2px;
      }
      .arrow {
        height: 21px;
      }
      .track {
        flex: 1;
      }
      .thumb {
        height: calc(50% + 4px);
        background: #686868;
      }
    `,
  ];

  render() {
    return html`
      <browser-bar></browser-bar>
      <div class="page">
        <side-nav></side-nav>
        <invoice-view></invoice-view>
        <div class="scroll" aria-hidden="true">
          <button class="arrow" tabindex="-1">${icon(10, 6, "0 0 10 6", svg`<path d="M5 .5L9.500 5.500h-9z" fill="#8a8a8a"/>`)}</button>
          <div class="track"><div class="thumb"></div></div>
          <button class="arrow" tabindex="-1">${icon(10, 6, "0 0 10 6", svg`<path d="M5 5.500L.5.5h9z" fill="#fff"/>`)}</button>
        </div>
      </div>
      <task-bar></task-bar>
    `;
  }
}
